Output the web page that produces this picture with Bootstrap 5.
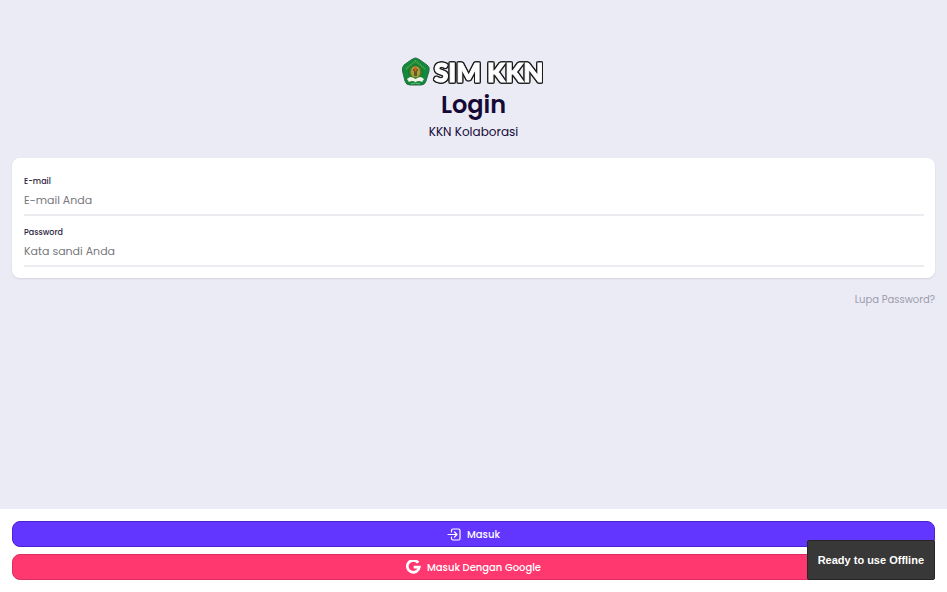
<!DOCTYPE html>
<html lang="id">
<head>
<meta charset="utf-8">
<meta name="viewport" content="width=device-width, initial-scale=1">
<title>SIM KKN - Login</title>
<link href="https://cdn.jsdelivr.net/npm/bootstrap@5.3.0/dist/css/bootstrap.min.css" rel="stylesheet">
<style>
body { font-family: Poppins, Inter, sans-serif; background: #ebebf5; color: #140a35; }
.login-main { padding: 56px 12px 24px; }
.brand-logo { width: 144px; height: 32px; }
.wordmark { font: 900 26px Lato, sans-serif; fill: #fff; stroke: #fff; stroke-width: 1px; filter: drop-shadow(1px 0 0 #1c1c1c) drop-shadow(-1px 0 0 #1c1c1c) drop-shadow(0 1px 0 #1c1c1c) drop-shadow(0 -1px 0 #1c1c1c); }
.login-title { font-size: 24px; line-height: 34px; font-weight: 600; }
.login-sub { font-size: 12px; line-height: 20px; font-weight: 400; color: #140a35; }
.form-box { margin-top: 16px; padding: 14px 11px 11px 12px; border-radius: 8px; background: #fff; box-shadow: 0 1px 2px rgba(20, 20, 50, .1); }
.field-label { display: block; padding-top: 1px; font-size: 8px; line-height: 18px; font-weight: 500; color: #2c2540; }
.form-box .form-control { height: 25px; padding: 0 0 5px; border: 0; border-bottom: 2px solid #ececf0; border-radius: 0; font-size: 11px; line-height: 18px; box-shadow: none; }
.form-box .form-control::placeholder { color: #76767c; opacity: 1; }
.field + .field { margin-top: 7px; }
.forgot { margin-top: 13px; font-size: 10px; line-height: 18px; color: #9d9bad; }
.action-bar { padding: 12px; background: #fff; gap: 7px; }
.btn-action { height: 26px; padding: 1px 0 0; border-radius: 8px; font-size: 10px; line-height: 16px; font-weight: 500; gap: 6px; --bs-btn-color: #fff; --bs-btn-hover-color: #fff; }
.btn-login { --bs-btn-bg: #6236ff; --bs-btn-border-color: #4a22d0; --bs-btn-hover-bg: #5329ed; }
.btn-google { --bs-btn-bg: #ff396f; --bs-btn-border-color: #dc2c60; --bs-btn-hover-bg: #ed2b60; }
.offline-toast { right: 12px; bottom: 12px; padding: 11px 10px; border: 1px solid #262626; border-radius: 2px; background: #383838; color: #fff; font: 700 11px/16px "Liberation Sans", sans-serif; }
</style>
<script src="https://cdn.jsdelivr.net/npm/bootstrap@5.3.0/dist/js/bootstrap.bundle.min.js" defer></script>
</head>
<body class="min-vh-100 d-flex flex-column">
<main class="login-main flex-grow-1">
  <header class="text-center">
    <svg class="brand-logo d-block mx-auto" viewBox="0 0 144 32" role="img" aria-label="SIM KKN">
      <path d="M13.500 2 Q15 2 18 4 L25 9 Q28 11 27 15 L24 25 Q23 29 19 29 L8 29 Q4 29 3 25 L0.500 15 Q0 11 2 9 L9 4 Q12 2 13.500 2Z" fill="#128a3c" stroke="#286c46"/>
      <path d="M4 13 L13.500 5 L23 13" fill="none" stroke="#60a74c" stroke-width="2" stroke-dasharray="1 1"/>
      <circle cx="13.500" cy="16" r="7" fill="#477e2b" stroke="#187231"/>
      <path d="M9 18 Q8 11 13.500 10 Q19 11 18 18 L16 21 H11Z" fill="#a2a13a"/>
      <path d="M11 13h5v2h-1v5h-3v-5h-1z" fill="#6c5426"/>
      <path d="M13.500 10 L15 13 L13.500 16 L12 13Z" fill="#d95628"/>
      <path d="M5 23 L8 21 Q11 21 13.500 23 Q16 21 19 21 L22 23 L20 26 Q17 24 13.500 26 Q10 24 7 26Z" fill="#f3f5e9"/>
      <path d="M9 28 Q13.500 26 18 28" fill="none" stroke="#75b680"/>
      <text class="wordmark" x="32" y="26">SIM KKN</text>
    </svg>
    <h1 class="login-title mb-0">Login</h1>
    <p class="login-sub mb-0">KKN Kolaborasi</p>
  </header>
  <form id="login-form">
    <div class="form-box">
      <div class="field">
        <label class="field-label" for="email">E-mail</label>
        <input class="form-control" id="email" type="email" placeholder="E-mail Anda">
      </div>
      <div class="field">
        <label class="field-label" for="password">Password</label>
        <input class="form-control" id="password" type="password" placeholder="Kata sandi Anda">
      </div>
    </div>
    <div class="d-flex justify-content-end"><a class="forgot text-decoration-none" href="#">Lupa Password?</a></div>
  </form>
</main>
<footer class="action-bar d-flex flex-column">
  <button class="btn btn-action btn-login w-100 d-flex align-items-center justify-content-center" type="submit" form="login-form">
    <svg width="14" height="14" viewBox="0 0 14 14" fill="none" stroke="currentColor" stroke-width="1.2" stroke-linecap="round" stroke-linejoin="round" aria-hidden="true"><path d="M4.500 4V2.500Q4.500 1 6 1H11.500Q13 1 13 2.500V10.500Q13 12 11.500 12H6Q4.500 12 4.500 10.500V9M1 6.500H10M7.500 4L10 6.500L7.500 9"/></svg>
    Masuk
  </button>
  <button class="btn btn-action btn-google w-100 d-flex align-items-center justify-content-center" type="button">
    <svg width="15" height="15" viewBox="0 0 15 15" fill="none" stroke="currentColor" stroke-width="2.700" aria-hidden="true"><path d="M12.200 2.800A6 6 0 1 0 13.300 7.100H7.700"/></svg>
    Masuk Dengan Google
  </button>
</footer>
<div class="offline-toast position-fixed" role="status">Ready to use Offline</div>
</body>
</html>
